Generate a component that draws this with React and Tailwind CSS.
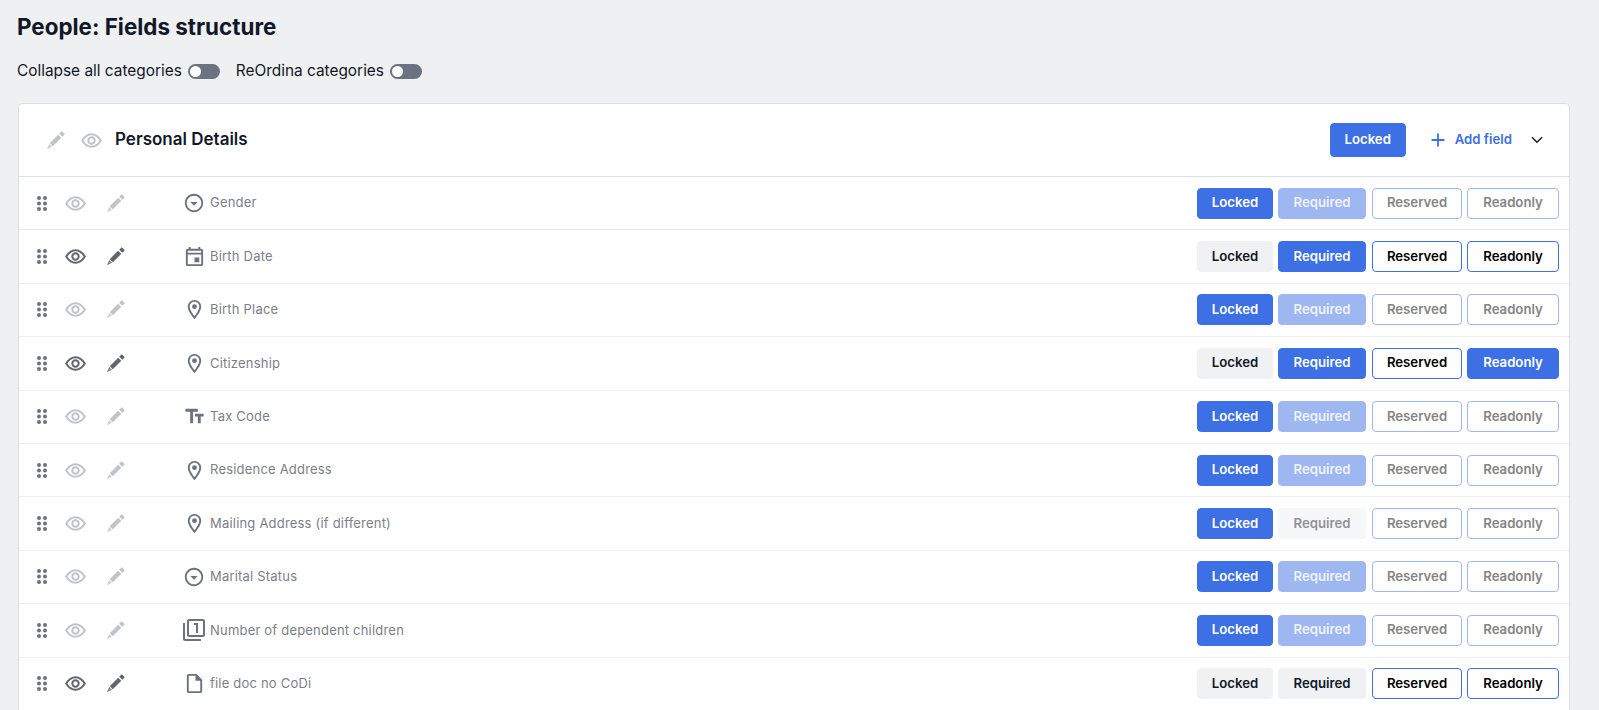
import React from 'react';
import {
  MdOutlineArrowDropDownCircle,
  MdOutlineEvent,
  MdOutlineLocationOn,
  MdTextFields,
  MdOutlineFilter1,
  MdOutlineInsertDriveFile,
  MdAdd,
} from 'react-icons/md';

const btnBase = 'h-[31px] rounded-[4px] border text-[13.2px] font-semibold flex items-center justify-center';
const btnStyles = {
  blue: 'bg-[#3d6fe5] border-[#3d6fe5] text-white',
  faded: 'bg-[#9fb7f0] border-[#9fb7f0] text-[#eef2fd]',
  gray: 'bg-[#f0f1f3] border-[#f0f1f3] text-[#111827]',
  pale: 'bg-[#f6f7f9] border-[#f6f7f9] text-[#8f939b]',
  outline: 'bg-white border-[#3d6fe5] text-black',
  outlineDim: 'bg-white border-[#9fb7f0] text-[#858585]',
};

const dimRow = { active: false, locked: 'blue', required: 'faded', reserved: 'outlineDim', readonly: 'outlineDim' };

const rows = [
  { label: 'Gender', Icon: MdOutlineArrowDropDownCircle, size: 22, ...dimRow },
  { label: 'Birth Date', Icon: MdOutlineEvent, size: 23, active: true, locked: 'gray', required: 'blue', reserved: 'outline', readonly: 'outline' },
  { label: 'Birth Place', Icon: MdOutlineLocationOn, size: 23, ...dimRow },
  { label: 'Citizenship', Icon: MdOutlineLocationOn, size: 23, active: true, locked: 'gray', required: 'blue', reserved: 'outline', readonly: 'blue' },
  { label: 'Tax Code', Icon: MdTextFields, size: 23, ...dimRow },
  { label: 'Residence Address', Icon: MdOutlineLocationOn, size: 23, ...dimRow },
  { label: 'Mailing Address (if different)', Icon: MdOutlineLocationOn, size: 23, ...dimRow, required: 'pale' },
  { label: 'Marital Status', Icon: MdOutlineArrowDropDownCircle, size: 22, ...dimRow },
  { label: 'Number of dependent children', Icon: MdOutlineFilter1, size: 24, ...dimRow },
  { label: 'file doc no CoDi', Icon: MdOutlineInsertDriveFile, size: 23, active: true, locked: 'gray', required: 'gray', reserved: 'outline', readonly: 'outline' },
];

function DragDots() {
  return (
    <svg width="10" height="15" viewBox="0 0 10 15" className="text-[#6b7280]" fill="currentColor">
      {[2, 7.5, 13].map((cy) => (
        <g key={cy}>
          <circle cx="2" cy={cy} r="2" />
          <circle cx="8" cy={cy} r="2" />
        </g>
      ))}
    </svg>
  );
}

function EyeIcon({ className }) {
  return (
    <svg width="21" height="15" viewBox="0 0 21 15" fill="none" stroke="currentColor" strokeWidth="2" className={className}>
      <path d="M1.200 7.500C4 3 7.100 1.200 10.500 1.200s6.500 1.800 9.300 6.300c-2.800 4.500-5.900 6.300-9.300 6.300S4 12 1.200 7.500Z" />
      <circle cx="10.500" cy="7.500" r="3.200" />
    </svg>
  );
}

function PencilIcon({ className }) {
  return (
    <svg width="19" height="19" viewBox="0 0 18 18" fill="currentColor" className={className}>
      <path d="M3.500 11.500 11.500 3.500 14.500 6.500 6.500 14.500Z" />
      <path d="M3 12.300 5.700 15 .8 17.200Z" opacity="0.8" />
      <path d="M12.500 2.500 14.400.6a.8.8 0 0 1 1.100 0l1.900 1.900a.8.8 0 0 1 0 1.100L15.500 5.500Z" />
    </svg>
  );
}

function ChevronIcon({ className }) {
  return (
    <svg width="12" height="8" viewBox="0 0 12 8" fill="none" stroke="currentColor" strokeWidth="1.400" className={className}>
      <path d="M1 1.200 6 6.200 11 1.200" />
    </svg>
  );
}

function Toggle() {
  return (
    <span className="w-[32px] h-[15px] rounded-full bg-[#6b7280] flex items-center pl-[2px]">
      <span className="w-[11px] h-[11px] rounded-full bg-white" />
    </span>
  );
}

function Row({ row }) {
  const { Icon } = row;
  const actionColor = row.active ? 'text-[#5f6670]' : 'text-[#c0c3c9]';
  return (
    <div className="h-[53.4px] flex items-center border-b border-[#eceef0] pl-[18px] pr-[10px]">
      <DragDots />
      <EyeIcon className={`ml-[18px] ${actionColor}`} />
      <PencilIcon className={`ml-[20px] ${actionColor}`} />
      <span className="ml-[58px] w-[22px] flex justify-center">
        <Icon className="shrink-0 text-[#6b7280]" size={row.size} />
      </span>
      <span className="ml-[5px] text-[13px] text-[#7b8089] tracking-[0.2px]">{row.label}</span>
      <div className="ml-auto flex">
        <div className={`${btnBase} w-[76px] ${btnStyles[row.locked]}`}>Locked</div>
        <div className={`${btnBase} ml-[5px] w-[88px] ${btnStyles[row.required]}`}>Required</div>
        <div className={`${btnBase} ml-[6px] w-[90px] ${btnStyles[row.reserved]}`}>Reserved</div>
        <div className={`${btnBase} ml-[5px] w-[92px] ${btnStyles[row.readonly]}`}>Readonly</div>
      </div>
    </div>
  );
}

export default function App() {
  return (
    <div className="h-[710px] overflow-hidden bg-[#eff0f2] pl-[18px] pr-[29px] pt-[14px] font-['Inter',sans-serif]">
      <h1 className="-ml-px text-[22.4px] leading-[26px] font-bold text-[#111827]">People: Fields structure</h1>
      <div className="mt-[19px] h-[24px] flex items-center text-[15.4px] text-[#111827]">
        <span className="-ml-px">Collapse all categories</span>
        <span className="ml-[6px]"><Toggle /></span>
        <span className="ml-[16px]">ReOrdina categories</span>
        <span className="ml-[6px]"><Toggle /></span>
      </div>
      <div className="mt-[20px] border border-[#d9dee8] bg-white rounded-t-[4px]">
        <div className="h-[73px] flex items-center border-b border-[#d9dee8] pl-[27px] pr-[26px]">
          <PencilIcon className="text-[#c0c3c9]" />
          <EyeIcon className="ml-[16px] text-[#c0c3c9]" />
          <span className="ml-[13px] text-[17px] font-semibold text-[#111827]">Personal Details</span>
          <div className={`${btnBase} ml-auto w-[76px] !h-[34px] ${btnStyles.blue}`}>Locked</div>
          <MdAdd className="ml-[21px] text-[#3d6fe5]" size={22} />
          <span className="ml-[6px] text-[13.2px] font-semibold text-[#3d6fe5]">Add field</span>
          <ChevronIcon className="ml-[19px] text-[#111827]" />
        </div>
        {rows.map((row) => (
          <Row key={row.label} row={row} />
        ))}
      </div>
    </div>
  );
}
